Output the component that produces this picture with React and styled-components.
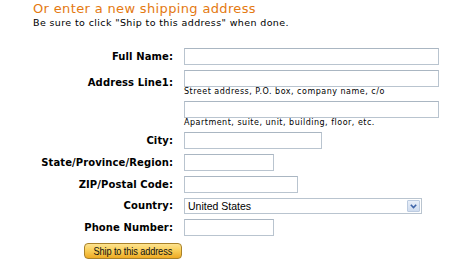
import React from "react";
import styled, { createGlobalStyle } from "styled-components";

const Global = createGlobalStyle`
  html, body { margin: 0; padding: 0; background: #fff; }
  body { font-family: "DejaVu Sans", Verdana, sans-serif; color: #000; }
`;

const Page = styled.div`
  width: 474px;
  height: 269px;
  overflow: hidden;
  background: #fff;
`;

const Header = styled.div`
  padding: 1px 0 0 33px;
`;

const Title = styled.h2`
  margin: 0;
  font-family: "DejaVu Sans", Verdana, sans-serif;
  font-weight: normal;
  font-size: 13px;
  letter-spacing: 0.35px;
  line-height: 15px;
  color: #e47911;
`;

const Subtitle = styled.div`
  margin-top: 2px;
  font-family: "DejaVu Sans", Verdana, sans-serif;
  font-size: 9.5px;
  letter-spacing: 0.38px;
  line-height: 10px;
  color: #000;
`;

const Form = styled.div`
  margin-top: 20px;
  display: grid;
  grid-template-columns: 173px 1fr;
  column-gap: 11px;
  row-gap: 5px;
  align-items: center;
`;

const Label = styled.label`
  justify-self: end;
  font-family: "DejaVu Sans", Verdana, sans-serif;
  font-weight: bold;
  font-size: 10px;
  letter-spacing: 0.1px;
  line-height: 12px;
  color: #000;
  white-space: nowrap;
`;

const Field = styled.div`
  display: flex;
  flex-direction: column;
  align-items: flex-start;
`;

const Input = styled.input`
  box-sizing: border-box;
  width: ${(p) => p.$w}px;
  height: 17px;
  margin: 0;
  padding: 0 3px;
  border: 1px solid #b9c4cf;
  border-top-color: #aab6c2;
  background: #fff;
  font-family: "Liberation Sans", Arial, sans-serif;
  font-size: 11px;
  outline: none;
`;

const Hint = styled.div`
  padding-top: 1px;
  font-family: "DejaVu Sans", Verdana, sans-serif;
  font-size: 8px;
  letter-spacing: 0.5px;
  line-height: 8px;
  color: #000;
  white-space: nowrap;
`;

const SelectBox = styled.div`
  box-sizing: border-box;
  width: ${(p) => p.$w}px;
  height: 16px;
  border: 1px solid #b9c4cf;
  background: #fff;
  display: flex;
  align-items: center;
  justify-content: space-between;
  padding: 0 1px 0 3px;
`;

const SelectValue = styled.span`
  font-family: "Liberation Sans", Arial, sans-serif;
  font-size: 10.5px;
  line-height: 12px;
  color: #000;
`;

const ArrowBox = styled.span`
  box-sizing: border-box;
  width: 13px;
  height: 12px;
  background: linear-gradient(#e8eff9, #cfdcef);
  border: 1px solid #bccbe0;
  border-radius: 1px;
  display: flex;
  align-items: center;
  justify-content: center;
`;

const ButtonCell = styled.div`
  grid-column: 1 / span 2;
  padding: 2px 0 0 84px;
`;

const Button = styled.button`
  box-sizing: border-box;
  width: 98px;
  height: 16px;
  margin: 0;
  padding: 0;
  border: 1px solid #a9822a;
  border-radius: 4px;
  background: linear-gradient(#fde390 0%, #f9cf5a 45%, #eeaa24 100%);
  display: flex;
  align-items: center;
  justify-content: center;
  cursor: pointer;
`;

const ButtonText = styled.span`
  display: inline-block;
  font-family: "Liberation Sans", Arial, sans-serif;
  font-size: 11px;
  line-height: 13px;
  letter-spacing: -0.15px;
  color: #111;
  transform: scaleX(0.84);
  white-space: nowrap;
`;

const rows = [
  { label: "Full Name:", w: 255 },
  { label: "Address Line1:", w: 255, hint: "Street address, P.O. box, company name, c/o" },
  { label: "", w: 255, hint: "Apartment, suite, unit, building, floor, etc." },
  { label: "City:", w: 138 },
  { label: "State/Province/Region:", w: 90 },
  { label: "ZIP/Postal Code:", w: 114 },
];

export default function App() {
  return (
    <Page>
      <Global />
      <Header>
        <Title>Or enter a new shipping address</Title>
        <Subtitle>Be sure to click "Ship to this address" when done.</Subtitle>
      </Header>
      <Form>
        {rows.map((r, i) => (
          <React.Fragment key={i}>
            <Label>{r.label}</Label>
            <Field>
              <Input $w={r.w} />
              {r.hint && <Hint>{r.hint}</Hint>}
            </Field>
          </React.Fragment>
        ))}
        <Label>Country:</Label>
        <Field>
          <SelectBox $w={238}>
            <SelectValue>United States</SelectValue>
            <ArrowBox>
              <svg width="7" height="5" viewBox="0 0 7 5">
                <path d="M0.8 0.8 L3.5 3.6 L6.2 0.8" fill="none" stroke="#3e64a8" strokeWidth="1.6" />
              </svg>
            </ArrowBox>
          </SelectBox>
        </Field>
        <Label>Phone Number:</Label>
        <Field>
          <Input $w={90} />
        </Field>
        <ButtonCell>
          <Button>
            <ButtonText>Ship to this address</ButtonText>
          </Button>
        </ButtonCell>
      </Form>
    </Page>
  );
}
